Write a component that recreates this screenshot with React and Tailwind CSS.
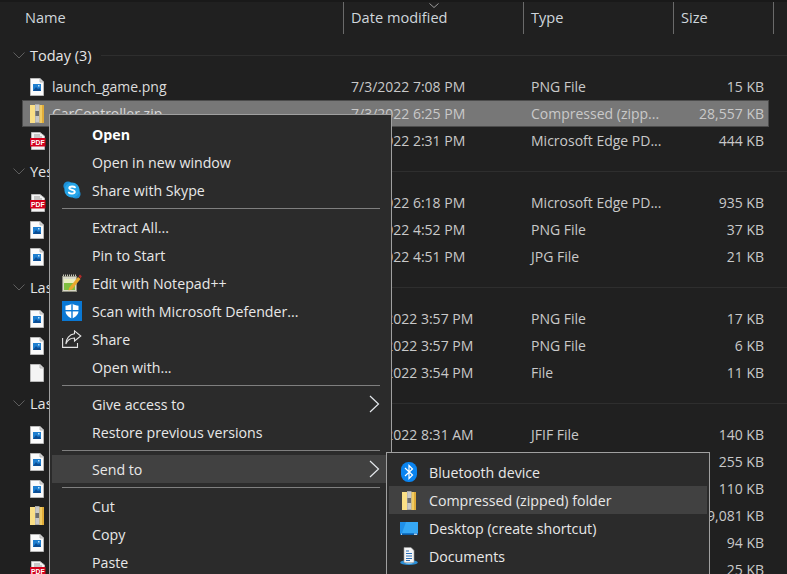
import React from 'react';

const uiFont = '"Open Sans", "Noto Sans", sans-serif';

const ImageIcon = () => (
  <svg width="14" height="18" viewBox="0 0 14 18" className="block">
    <path d="M0.5 0.5H10L13.5 4V17.5H0.5Z" fill="#fbfbfb" stroke="#b8b8b8" />
    <path d="M10 0.5V4H13.5" fill="#d8d8d8" stroke="#b8b8b8" />
    <rect x="3" y="6" width="8" height="7" fill="#1f7fd0" />
    <path d="M3 13L6 9L8 11L9.5 10L11 13Z" fill="#0b4d94" />
    <rect x="8" y="7" width="1.5" height="1.5" fill="#bfe4fb" />
  </svg>
);

const BlankIcon = () => (
  <svg width="14" height="18" viewBox="0 0 14 18" className="block">
    <path d="M0.5 0.5H10L13.5 4V17.5H0.5Z" fill="#f4f4f4" stroke="#b8b8b8" />
    <path d="M10 0.5V4H13.5" fill="#d8d8d8" stroke="#b8b8b8" />
  </svg>
);

const PdfIcon = () => (
  <svg width="16" height="18" viewBox="0 0 16 18" className="block">
    <path d="M1.5 0.5H10L14.5 4V17.5H1.5Z" fill="#f4f4f4" stroke="#b8b8b8" />
    <rect x="4" y="2.5" width="6" height="1" fill="#9a9a9a" />
    <rect x="4" y="4.5" width="8" height="1" fill="#9a9a9a" />
    <rect x="0" y="6" width="15.5" height="8.5" fill="#d3001b" />
    <text x="7.8" y="12.8" textAnchor="middle" fontSize="6.8" fontWeight="700" fill="#fff" fontFamily="Liberation Sans, sans-serif">PDF</text>
  </svg>
);

const ZipIcon = () => (
  <svg width="14" height="19" viewBox="0 0 14 19" className="block">
    <rect x="0" y="1" width="14" height="18" rx="0.5" fill="#f2cc62" />
    <rect x="0" y="1" width="5" height="18" fill="#fadf86" />
    <rect x="12" y="1" width="2" height="18" fill="#e0ac3a" />
    <rect x="5" y="0" width="4.5" height="19" fill="#a8a8a8" />
    <path d="M5.5 2H9M5.5 4H9M5.5 6H9M5.5 13H9M5.5 15H9M5.5 17H9" stroke="#f0f0f0" strokeWidth="0.9" />
    <rect x="5.5" y="7" width="3.5" height="5" fill="#6e6e6e" />
  </svg>
);

const SkypeIcon = () => (
  <svg width="18" height="18" viewBox="0 0 18 18" className="block">
    <circle cx="5" cy="5" r="4.6" fill="#1c8fd6" />
    <circle cx="13" cy="13" r="4.6" fill="#1c8fd6" />
    <circle cx="9" cy="9" r="7.6" fill="#26a5e8" />
    <path d="M12 6.3C11.2 5.3 6.6 4.8 6.3 7C6 9.2 12 8.6 11.8 11C11.6 13.2 7 13 5.9 11.6" fill="none" stroke="#fff" strokeWidth="1.9" strokeLinecap="round" />
  </svg>
);

const NotepadIcon = () => (
  <svg width="20" height="18" viewBox="0 0 20 18" className="block">
    <rect x="0.5" y="2.5" width="14" height="15" fill="#d9d9c8" stroke="#8f8f80" />
    <path d="M1 1.5H14" stroke="#c8c8b8" strokeDasharray="1 1" strokeWidth="2" />
    <rect x="2" y="9" width="11" height="7" fill="#7fbf3f" />
    <rect x="2" y="5" width="11" height="4" fill="#e9efc0" />
    <path d="M7 14L16 3L18.5 5L10 15.5L6.5 16.5Z" fill="#e8a92e" />
    <path d="M16.5 2.2L18 0.6L19.8 2.2L18.5 4.4Z" fill="#b02a2a" />
  </svg>
);

const DefenderIcon = () => (
  <svg width="20" height="20" viewBox="0 0 20 20" className="block">
    <rect width="20" height="20" fill="#0a78d4" />
    <path d="M10 2.5C8 4 5.8 4.6 3.5 4.7V10C3.5 13.5 6.5 16 10 17.5C13.5 16 16.5 13.5 16.5 10V4.7C14.2 4.6 12 4 10 2.5Z" fill="#fff" />
    <rect x="9.3" y="2" width="1.4" height="16" fill="#0a78d4" />
    <rect x="3" y="9" width="14" height="1.4" fill="#0a78d4" />
  </svg>
);

const ShareIcon = () => (
  <svg width="20" height="18" viewBox="0 0 20 18" fill="none" stroke="#e4e4e4" strokeWidth="1.1" className="block">
    <path d="M0.6 8V17.4H15.5V13" />
    <path d="M12.5 0.8L18.8 6L12.5 11V8C8.5 8 5.5 9.8 3.8 14C4 8.5 7.5 4.3 12.5 3.8Z" />
  </svg>
);

const BluetoothIcon = () => (
  <svg width="16" height="20" viewBox="0 0 16 20" className="block">
    <rect width="16" height="20" rx="7.5" fill="#0a84f0" />
    <path d="M4 6L11.5 13L8 16.5V3.5L11.5 7L4 14" fill="none" stroke="#fff" strokeWidth="1.2" />
  </svg>
);

const DesktopIcon = () => (
  <svg width="18" height="13" viewBox="0 0 18 13" className="block">
    <rect width="18" height="13" fill="#1f8fe8" />
    <path d="M6 0H18V11L2 11Z" fill="#36a8f5" />
    <rect x="0" y="11.5" width="18" height="1.5" fill="#0b5da8" />
    <rect x="1" y="11.7" width="1" height="1" fill="#fff" />
    <rect x="14" y="11.7" width="3" height="1" fill="#fff" />
  </svg>
);

const DocumentsIcon = () => (
  <svg width="18" height="18" viewBox="0 0 18 18" className="block">
    <ellipse cx="9" cy="15.5" rx="8.8" ry="2.5" fill="#2a8fd8" />
    <ellipse cx="9" cy="15.5" rx="4" ry="1.2" fill="#9fd4f5" />
    <path d="M4 0.5H11L14 3.5V15.5H4Z" fill="#f6f6f6" stroke="#9a9a9a" strokeWidth="0.6" />
    <path d="M6 4H9M6 6.5H12M6 9H12M6 11.5H12M6 13.5H10" stroke="#2a6fb8" strokeWidth="1" />
  </svg>
);

const Chevron = () => (
  <svg width="11" height="18" viewBox="0 0 11 18" fill="none" stroke="#e4e8ec" strokeWidth="1.2" className="block">
    <path d="M1 1L9.5 9L1 17" />
  </svg>
);

const groups = [
  {
    title: 'Today (3)',
    rows: [
      { icon: 'image', name: 'launch_game.png', date: '7/3/2022 7:08 PM', type: 'PNG File', size: '15 KB' },
      { icon: 'zip', name: 'CarController.zip', date: '7/3/2022 6:25 PM', type: 'Compressed (zipp...', size: '28,557 KB', selected: true },
      { icon: 'pdf', name: '', date: '7/3/2022 2:31 PM', type: 'Microsoft Edge PD...', size: '444 KB' },
    ],
  },
  {
    title: 'Yesterday (3)',
    rows: [
      { icon: 'pdf', name: '', date: '7/2/2022 6:18 PM', type: 'Microsoft Edge PD...', size: '935 KB' },
      { icon: 'image', name: '', date: '7/2/2022 4:52 PM', type: 'PNG File', size: '37 KB' },
      { icon: 'image', name: '', date: '7/2/2022 4:51 PM', type: 'JPG File', size: '21 KB' },
    ],
  },
  {
    title: 'Last week (3)',
    rows: [
      { icon: 'image', name: '', date: '6/30/2022 3:57 PM', type: 'PNG File', size: '17 KB' },
      { icon: 'image', name: '', date: '6/30/2022 3:57 PM', type: 'PNG File', size: '6 KB' },
      { icon: 'blank', name: '', date: '6/30/2022 3:54 PM', type: 'File', size: '11 KB' },
    ],
  },
  {
    title: 'Last month (6)',
    rows: [
      { icon: 'image', name: '', date: '6/20/2022 8:31 AM', type: 'JFIF File', size: '140 KB' },
      { icon: 'image', name: '', date: '', type: '', size: '255 KB' },
      { icon: 'image', name: '', date: '', type: '', size: '110 KB' },
      { icon: 'zip', name: '', date: '', type: '', size: '9,081 KB' },
      { icon: 'image', name: '', date: '', type: '', size: '94 KB' },
      { icon: 'pdf', name: '', date: '', type: '', size: '25 KB' },
    ],
  },
];

const fileIcons = { image: ImageIcon, zip: ZipIcon, pdf: PdfIcon, blank: BlankIcon };

const FileRow = ({ row }) => {
  const Icon = fileIcons[row.icon];
  return (
    <div
      className={`flex h-[27px] w-[747px] ml-[22px] items-center border pl-[7px] text-[14px] ${
        row.selected ? 'bg-[#777777] border-[#4c4c4c] text-[#d8d8d8]' : 'border-transparent text-[#dcdcdc]'
      }`}
    >
      <div className="w-[22px] shrink-0"><Icon /></div>
      <div className="w-[299px] shrink-0 whitespace-nowrap">{row.name}</div>
      <div className="w-[180px] shrink-0 whitespace-nowrap text-[#c9c9c9]">{row.date}</div>
      <div className="w-[142px] shrink-0 whitespace-nowrap text-[#c9c9c9]">{row.type}</div>
      <div className="w-[91px] shrink-0 whitespace-nowrap text-right text-[#c9c9c9]">{row.size}</div>
    </div>
  );
};

const Group = ({ group }) => (
  <div>
    <div className="flex h-[35px] items-center">
      <svg width="12" height="7" viewBox="0 0 12 7" fill="none" stroke="#5e5e5e" className="ml-[13px] mr-[5px] shrink-0">
        <path d="M0.5 0.5L6 6L11.5 0.5" />
      </svg>
      <span className="whitespace-nowrap text-[14.5px] text-[#e6e6e6]">{group.title}</span>
      <div className="ml-[9px] h-px flex-1 bg-[#2e2e2e]" />
    </div>
    {group.rows.map((row, i) => <FileRow key={i} row={row} />)}
  </div>
);

const MenuItem = ({ icon, label, bold, arrow, hover }) => (
  <div className={`relative flex h-[28px] items-center pl-[40px] pt-[2px] text-[14.2px] text-[#e8e8e8] ${bold ? 'font-bold text-white' : ''} ${hover ? 'bg-[#414141]' : ''}`}>
    {icon && <div className="absolute left-[10px] top-0 flex h-full w-[20px] items-center justify-center">{icon}</div>}
    <span className="whitespace-nowrap">{label}</span>
    {arrow && <div className="absolute right-[9px] top-[5px]"><Chevron /></div>}
  </div>
);

const MenuSep = () => (
  <div className="flex h-[9px] items-center">
    <div className="ml-[10px] mr-[9px] h-px flex-1 bg-[#7f7f7f]" />
  </div>
);

const ContextMenu = () => (
  <div className="absolute left-[49px] top-[114px] h-[480px] w-[343px] border border-[#a0a0a0] bg-[#2b2b2b] px-[2px] pt-[5px]">
    <MenuItem label="Open" bold />
    <MenuItem label="Open in new window" />
    <MenuItem label="Share with Skype" icon={<SkypeIcon />} />
    <MenuSep />
    <MenuItem label="Extract All..." />
    <MenuItem label="Pin to Start" />
    <MenuItem label="Edit with Notepad++" icon={<NotepadIcon />} />
    <MenuItem label="Scan with Microsoft Defender..." icon={<DefenderIcon />} />
    <MenuItem label="Share" icon={<ShareIcon />} />
    <MenuItem label="Open with..." />
    <MenuSep />
    <MenuItem label="Give access to" arrow />
    <MenuItem label="Restore previous versions" />
    <MenuSep />
    <MenuItem label="Send to" arrow hover />
    <MenuSep />
    <MenuItem label="Cut" />
    <MenuItem label="Copy" />
    <MenuItem label="Paste" />
  </div>
);

const SendToMenu = () => (
  <div className="absolute left-[386px] top-[452px] h-[200px] w-[324px] border border-[#a0a0a0] bg-[#2b2b2b] px-[2px] pt-[5px]">
    <MenuItem label="Bluetooth device" icon={<BluetoothIcon />} />
    <MenuItem label="Compressed (zipped) folder" icon={<ZipIcon />} hover />
    <MenuItem label="Desktop (create shortcut)" icon={<DesktopIcon />} />
    <MenuItem label="Documents" icon={<DocumentsIcon />} />
  </div>
);

const columns = [
  { label: 'Name', width: 'w-[344px]', pad: 'pl-[25px]' },
  { label: 'Date modified', width: 'w-[180px]', pad: 'pl-[7px]' },
  { label: 'Type', width: 'w-[150px]', pad: 'pl-[7px]' },
  { label: 'Size', width: 'w-[100px]', pad: 'pl-[7px]' },
];

export default function App() {
  return (
    <div className="relative h-[574px] w-[787px] overflow-hidden bg-[#202020]" style={{ fontFamily: uiFont }}>
      <div className="h-[2px] bg-[#191919]" />
      {/* column headers */}
      <div className="relative flex h-[32px]">
        {columns.map((c) => (
          <div key={c.label} className={`flex items-center border-r border-[#6a6a6a] text-[14.6px] text-[#cfd6dc] ${c.width} ${c.pad}`}>
            {c.label}
          </div>
        ))}
        <svg width="10" height="5" viewBox="0 0 10 5" fill="none" stroke="#9a9a9a" className="absolute left-[429px] top-[1px]">
          <path d="M0.5 0.5L5 4.5L9.5 0.5" />
        </svg>
      </div>
      <div className="h-[4px]" />
      {groups.map((g) => <Group key={g.title} group={g} />)}
      <ContextMenu />
      <SendToMenu />
    </div>
  );
}
